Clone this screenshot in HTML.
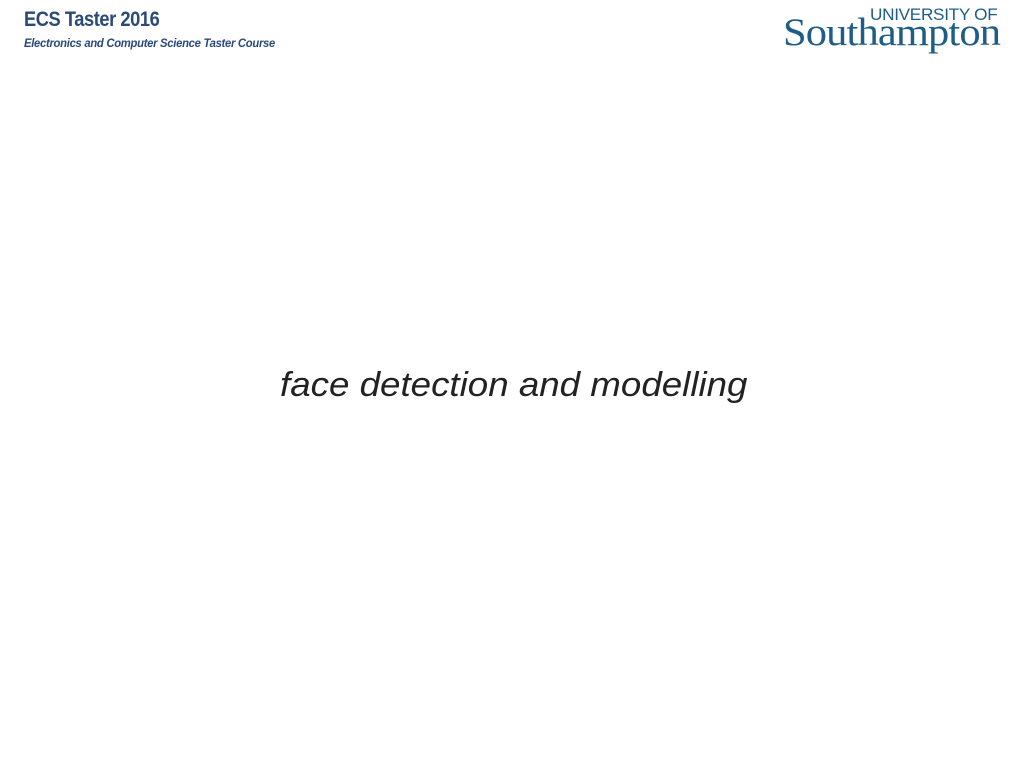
<!DOCTYPE html>
<html><head><style>
body{margin:0;width:1024px;height:768px;background:#fff;position:relative;overflow:hidden}
div{position:absolute;white-space:nowrap}
</style></head><body>
<div style="left:24px;top:8px;font:bold 21px 'Liberation Sans',sans-serif;color:#2b4a7a;letter-spacing:-0.5px;transform:scaleX(0.87);transform-origin:left">ECS Taster 2016</div>
<div style="left:24px;top:38px;font:italic bold 11.5px 'Liberation Sans',sans-serif;color:#2b4a7a;letter-spacing:-0.3px;transform:scaleX(0.98);transform-origin:left">Electronics and Computer Science Taster Course</div>
<div style="left:870px;top:5px;font:17px 'Liberation Sans',sans-serif;color:#1d5d87;letter-spacing:-0.3px;transform:scaleX(1.01);transform-origin:left">UNIVERSITY OF</div>
<div style="left:783px;top:10px;font:39px 'Liberation Serif',serif;color:#1d5d87;letter-spacing:-0.8px;transform:scaleX(1.09);transform-origin:left">Southampton</div>
<div style="left:280px;top:366px;font:italic 34px 'Liberation Sans',sans-serif;color:#222;transform:scaleX(1.08);transform-origin:left">face detection and modelling</div>
</body></html>
